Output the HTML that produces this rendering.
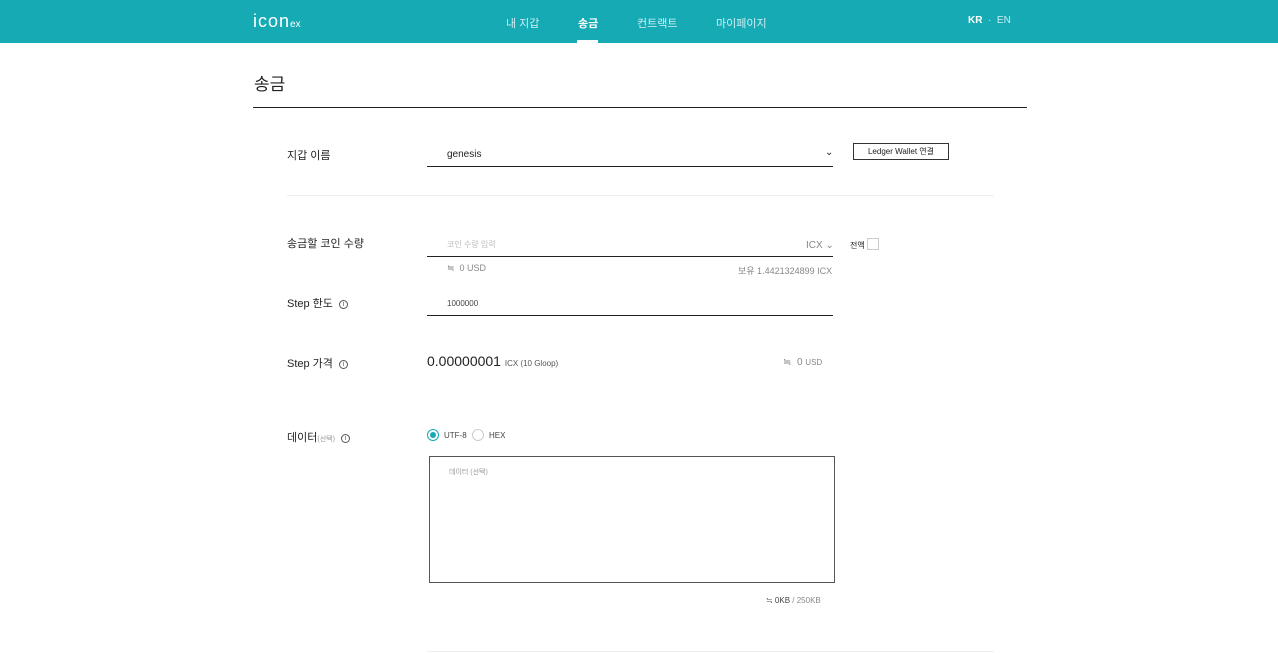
<!DOCTYPE html>
<html><head><meta charset="utf-8"><style>
*{margin:0;padding:0;box-sizing:border-box}
body{width:1278px;height:653px;overflow:hidden;background:#fff;font-family:"Liberation Sans","Noto Sans CJK KR",sans-serif;color:#222;position:relative}
.a{position:absolute;white-space:nowrap}
.hdr{position:absolute;left:0;top:0;width:1278px;height:43px;background:#16aab5}
.nav{color:#cdeff2;font-size:11px;top:15px}
.lbl{font-size:11px;color:#222}
.info{display:inline-block;width:9px;height:9px;border:1px solid #555;border-radius:50%;font-size:7px;line-height:7px;text-align:center;vertical-align:1px;margin-left:6px;color:#555}
.line{position:absolute;height:1px;background:#222}
.gray{color:#888}
</style></head><body>
<div class="hdr"></div>
<div class="a" style="left:253px;top:11px;color:#fff;font-size:18px;letter-spacing:1px">ic<span>o</span>n<span style="font-size:10px;letter-spacing:0">ex</span></div>
<div class="a nav" style="left:506px">내 지갑</div>
<div class="a nav" style="left:578px;color:#fff;font-weight:bold">송금</div>
<div class="a" style="left:577px;top:40px;width:21px;height:3px;background:#fff"></div>
<div class="a nav" style="left:637px">컨트랙트</div>
<div class="a nav" style="left:716px">마이페이지</div>
<div class="a" style="left:968px;top:15px;font-size:10px;color:#fff;font-weight:bold">KR <span style="color:#cdeff2;font-weight:normal">&nbsp;·&nbsp; EN</span></div>

<div class="a" style="left:254px;top:70px;font-size:17px">송금</div>
<div class="line" style="left:253px;top:107px;width:774px"></div>

<div class="a lbl" style="left:287px;top:147px">지갑 이름</div>
<div class="a" style="left:447px;top:149px;font-size:10px">genesis</div>
<div class="a" style="left:825px;top:147px;font-size:10px">⌄</div>
<div class="line" style="left:427px;top:166px;width:406px"></div>
<div class="a" style="left:853px;top:143px;width:96px;height:17px;border:1px solid #333;font-size:8px;text-align:center;line-height:15px">Ledger Wallet 연결</div>
<div class="a" style="left:287px;top:195px;width:707px;height:1px;background:#eee"></div>

<div class="a lbl" style="left:287px;top:235px">송금할 코인 수량</div>
<div class="a" style="left:447px;top:239px;font-size:8px;color:#bbb">코인 수량 입력</div>
<div class="a gray" style="left:806px;top:240px;font-size:10px">ICX ⌄</div>
<div class="line" style="left:427px;top:256px;width:406px"></div>
<div class="a" style="left:850px;top:240px;font-size:8px">전액</div>
<div class="a" style="left:867px;top:238px;width:12px;height:12px;border:1px solid #ccc"></div>
<div class="a gray" style="left:447px;top:263px;font-size:9px">≒ &nbsp;0 USD</div>
<div class="a gray" style="left:738px;top:264px;font-size:9px">보유 1.4421324899 ICX</div>

<div class="a lbl" style="left:287px;top:295px">Step 한도<span class="info">i</span></div>
<div class="a" style="left:447px;top:299px;font-size:8px;color:#444">1000000</div>
<div class="line" style="left:427px;top:315px;width:406px"></div>

<div class="a lbl" style="left:287px;top:355px">Step 가격<span class="info">i</span></div>
<div class="a" style="left:427px;top:353px;font-size:14px">0.00000001 <span style="font-size:8px;color:#555">ICX (10 Gloop)</span></div>
<div class="a gray" style="left:783px;top:357px;font-size:10px">≒ &nbsp;0 <span style="font-size:8px">USD</span></div>

<div class="a lbl" style="left:287px;top:429px">데이터<span style="font-size:7px;color:#999">(선택)</span><span class="info">i</span></div>
<div class="a" style="left:427px;top:429px;width:12px;height:12px;border:1px solid #16aab5;border-radius:50%"><div style="margin:2px;width:6px;height:6px;border-radius:50%;background:#16aab5"></div></div>
<div class="a" style="left:444px;top:431px;font-size:8px;color:#444">UTF-8</div>
<div class="a" style="left:472px;top:429px;width:12px;height:12px;border:1px solid #ccc;border-radius:50%"></div>
<div class="a" style="left:489px;top:431px;font-size:8px;color:#444">HEX</div>
<div class="a" style="left:429px;top:456px;width:406px;height:127px;border:1px solid #555"></div>
<div class="a" style="left:449px;top:467px;font-size:7px;color:#999">데이터 (선택)</div>
<div class="a" style="left:766px;top:596px;font-size:8px;color:#444">≒ 0KB <span class="gray">/ 250KB</span></div>
<div class="a" style="left:427px;top:651px;width:567px;height:1px;background:#eee"></div>
</body></html>
